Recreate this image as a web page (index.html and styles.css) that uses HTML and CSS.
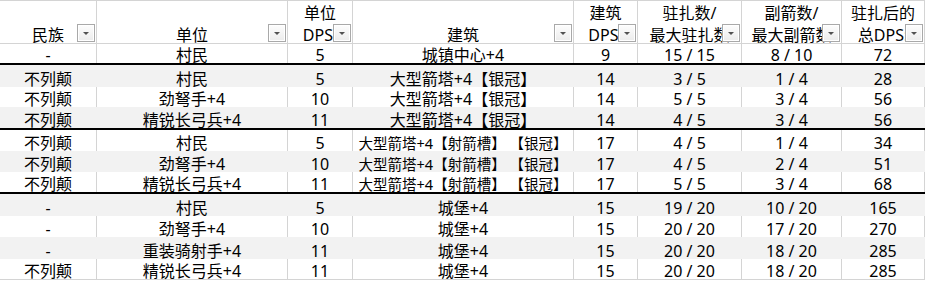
FILE: index.html
```html
<!DOCTYPE html>
<html lang="zh-CN">
<head>
<meta charset="utf-8">
<title>驻扎DPS表</title>
<link rel="stylesheet" href="styles.css">
</head>
<body>
<div class="sheet">
  <div class="row head">
    <div class="cell"><div class="label"><span>民族</span></div><span class="filter"></span></div>
    <div class="cell"><div class="label"><span>单位</span></div><span class="filter"></span></div>
    <div class="cell"><div class="label"><span>单位</span><span>DPS:</span></div><span class="filter"></span></div>
    <div class="cell"><div class="label"><span>建筑</span></div><span class="filter"></span></div>
    <div class="cell"><div class="label"><span>建筑</span><span>DPS:</span></div><span class="filter"></span></div>
    <div class="cell"><div class="label"><span>驻扎数/</span><span>最大驻扎数</span></div><span class="filter"></span></div>
    <div class="cell"><div class="label"><span>副箭数/</span><span>最大副箭数</span></div><span class="filter"></span></div>
    <div class="cell"><div class="label"><span>驻扎后的</span><span>总DPS:</span></div><span class="filter"></span></div>
  </div>

  <div class="row">
    <div class="cell">-</div><div class="cell">村民</div><div class="cell">5</div><div class="cell">城镇中心+4</div><div class="cell">9</div><div class="cell">15 / 15</div><div class="cell">8 / 10</div><div class="cell">72</div>
  </div>

  <div class="row band sep">
    <div class="cell">不列颠</div><div class="cell">村民</div><div class="cell">5</div><div class="cell">大型箭塔+4【银冠】</div><div class="cell">14</div><div class="cell">3 / 5</div><div class="cell">1 / 4</div><div class="cell">28</div>
  </div>
  <div class="row">
    <div class="cell">不列颠</div><div class="cell">劲弩手+4</div><div class="cell">10</div><div class="cell">大型箭塔+4【银冠】</div><div class="cell">14</div><div class="cell">5 / 5</div><div class="cell">3 / 4</div><div class="cell">56</div>
  </div>
  <div class="row band">
    <div class="cell">不列颠</div><div class="cell">精锐长弓兵+4</div><div class="cell">11</div><div class="cell">大型箭塔+4【银冠】</div><div class="cell">14</div><div class="cell">4 / 5</div><div class="cell">3 / 4</div><div class="cell">56</div>
  </div>

  <div class="row sep">
    <div class="cell">不列颠</div><div class="cell">村民</div><div class="cell">5</div><div class="cell small">大型箭塔+4【射箭槽】 【银冠】</div><div class="cell">17</div><div class="cell">4 / 5</div><div class="cell">1 / 4</div><div class="cell">34</div>
  </div>
  <div class="row band">
    <div class="cell">不列颠</div><div class="cell">劲弩手+4</div><div class="cell">10</div><div class="cell small">大型箭塔+4【射箭槽】 【银冠】</div><div class="cell">17</div><div class="cell">4 / 5</div><div class="cell">2 / 4</div><div class="cell">51</div>
  </div>
  <div class="row">
    <div class="cell">不列颠</div><div class="cell">精锐长弓兵+4</div><div class="cell">11</div><div class="cell small">大型箭塔+4【射箭槽】 【银冠】</div><div class="cell">17</div><div class="cell">5 / 5</div><div class="cell">3 / 4</div><div class="cell">68</div>
  </div>

  <div class="row band sep">
    <div class="cell">-</div><div class="cell">村民</div><div class="cell">5</div><div class="cell">城堡+4</div><div class="cell">15</div><div class="cell">19 / 20</div><div class="cell">10 / 20</div><div class="cell">165</div>
  </div>
  <div class="row">
    <div class="cell">-</div><div class="cell">劲弩手+4</div><div class="cell">10</div><div class="cell">城堡+4</div><div class="cell">15</div><div class="cell">20 / 20</div><div class="cell">17 / 20</div><div class="cell">270</div>
  </div>
  <div class="row band">
    <div class="cell">-</div><div class="cell">重装骑射手+4</div><div class="cell">11</div><div class="cell">城堡+4</div><div class="cell">15</div><div class="cell">20 / 20</div><div class="cell">18 / 20</div><div class="cell">285</div>
  </div>
  <div class="row last">
    <div class="cell">不列颠</div><div class="cell">精锐长弓兵+4</div><div class="cell">11</div><div class="cell">城堡+4</div><div class="cell">15</div><div class="cell">20 / 20</div><div class="cell">18 / 20</div><div class="cell">285</div>
  </div>
</div>
</body>
</html>
```

FILE: styles.css
```css
html, body {
  margin: 0;
  padding: 0;
  background: #ffffff;
}

body {
  font-family: "Noto Sans", "Noto Sans CJK SC", sans-serif;
  font-size: 16px;
  color: #000000;
}

.sheet {
  width: 925px;
}

.row {
  display: grid;
  grid-template-columns: 97px 191px 65px 221px 64px 104px 100px 83px;
  background: #ffffff;
}

.cell {
  border-right: 1px solid #d4d4d4;
  display: flex;
  justify-content: center;
  align-items: flex-end;
  white-space: nowrap;
  line-height: 16px;
  min-width: 0;
}

.head {
  border-top: 1px solid #d4d4d4;
  border-bottom: 1px solid #d4d4d4;
  height: 42px;
}

.head .cell {
  position: relative;
}

.head .label {
  text-align: center;
  line-height: 16px;
}

.head .label span {
  display: block;
}

.head .label span + span {
  margin-top: 6px;
}

.filter {
  position: absolute;
  right: 1px;
  bottom: 1px;
  width: 18px;
  height: 18px;
  box-sizing: border-box;
  border: 1px solid #a9a9a9;
  background: linear-gradient(#fdfdfd, #ebebeb);
  box-shadow: inset 0 0 0 1px #ffffff;
}

.filter::after {
  content: "";
  position: absolute;
  left: 5px;
  top: 7px;
  border-left: 3px solid transparent;
  border-right: 3px solid transparent;
  border-top: 3px solid #505050;
}

.band {
  background: #f2f2f2;
}

.band .cell {
  border-right-color: #f2f2f2;
}

.sep {
  border-top: 2px solid #000000;
}

.last {
  border-bottom: 1px solid #d4d4d4;
}

.small {
  font-size: 14.5px;
}

.sheet > .row:nth-child(2)  { height: 19px; }
.sheet > .row:nth-child(3)  { height: 22px; }
.sheet > .row:nth-child(4)  { height: 20px; }
.sheet > .row:nth-child(5)  { height: 21px; }
.sheet > .row:nth-child(6)  { height: 21px; }
.sheet > .row:nth-child(7)  { height: 21px; }
.sheet > .row:nth-child(8)  { height: 20px; }
.sheet > .row:nth-child(9)  { height: 22px; }
.sheet > .row:nth-child(10) { height: 21px; }
.sheet > .row:nth-child(11) { height: 22px; }
.sheet > .row:nth-child(12) { height: 20px; }
```
